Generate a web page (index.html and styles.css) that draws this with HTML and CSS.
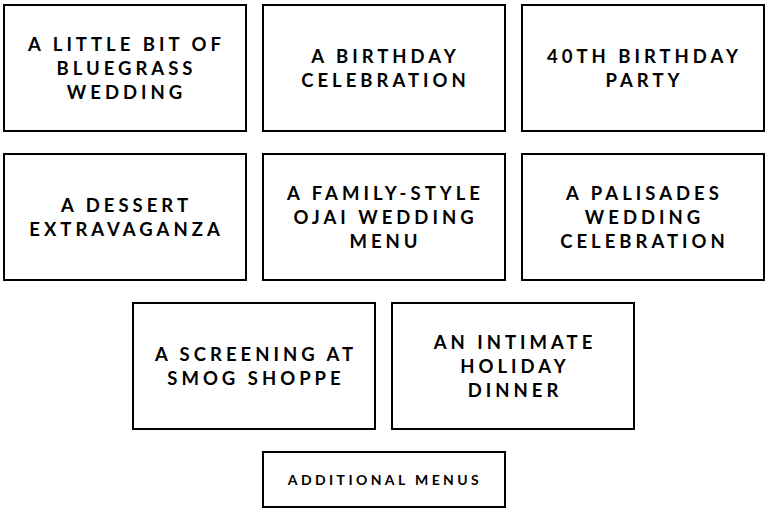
FILE: index.html
```html
<!DOCTYPE html>
<html>
<head>
<meta charset="utf-8">
<link rel="stylesheet" href="styles.css">
</head>
<body>
<div class="grid">
  <a class="card">A Little Bit of<br>Bluegrass<br>Wedding</a>
  <a class="card">A Birthday<br>Celebration</a>
  <a class="card">40th Birthday<br>Party</a>
  <a class="card">A Dessert<br>Extravaganza</a>
  <a class="card">A Family-Style<br>Ojai Wedding<br>Menu</a>
  <a class="card">A Palisades<br>Wedding<br>Celebration</a>
  <a class="card">A Screening at<br>Smog Shoppe</a>
  <a class="card">An Intimate<br>Holiday<br>Dinner</a>
</div>
<div class="more-row">
  <a class="more">Additional Menus</a>
</div>
</body>
</html>
```
FILE: styles.css
```css
html, body {
  margin: 0;
  padding: 0;
  background: #fff;
}
body {
  padding: 4px 4px 0 2px;
  font-family: "Lato", "DejaVu Sans", sans-serif;
  color: #000;
}
.grid {
  display: flex;
  flex-wrap: wrap;
  justify-content: center;
  column-gap: 15px;
  row-gap: 21px;
}
.card {
  box-sizing: border-box;
  width: 244px;
  height: 128px;
  border: 2px solid #000;
  padding-left: 4px;
  display: flex;
  align-items: center;
  justify-content: center;
  text-align: center;
  text-transform: uppercase;
  font-weight: 700;
  font-size: 18.5px;
  line-height: 24px;
  letter-spacing: 4px;
}
.more-row {
  display: flex;
  justify-content: center;
  margin-top: 21px;
}
.more {
  box-sizing: border-box;
  width: 244px;
  height: 57px;
  border: 2px solid #000;
  padding-left: 3px;
  display: flex;
  align-items: center;
  justify-content: center;
  text-transform: uppercase;
  font-weight: 700;
  font-size: 14px;
  letter-spacing: 3.4px;
}
```
